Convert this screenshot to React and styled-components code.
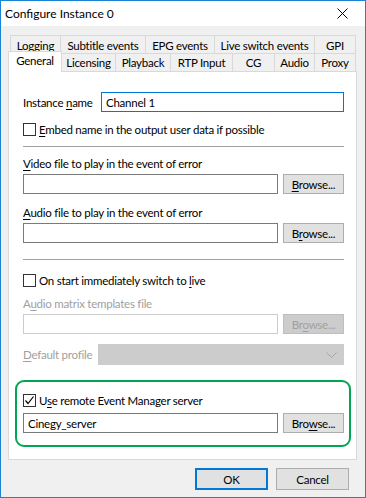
import React from "react";
import styled, { createGlobalStyle } from "styled-components";

const GlobalStyle = createGlobalStyle`
  html, body {
    margin: 0;
    padding: 0;
    background: #ffffff;
  }
  body {
    font-family: Lato, "Open Sans", sans-serif;
    font-size: 11.5px;
    letter-spacing: -0.25px;
    color: #000000;
  }
`;

const Window = styled.div`
  box-sizing: border-box;
  width: 366px;
  height: 498px;
  border: 1px solid #1883d7;
  background: #f0f0f0;
  display: flex;
  flex-direction: column;
`;

const TitleBar = styled.div`
  height: 25px;
  background: #ffffff;
  display: flex;
  align-items: center;
  justify-content: space-between;
  padding: 0 0 0 4px;
  font-size: 12px;
  letter-spacing: 0;
`;

const CloseBox = styled.div`
  width: 46px;
  height: 25px;
  display: flex;
  align-items: center;
  justify-content: center;
`;

const Body = styled.div`
  padding: 9px 9px 0 6px;
  display: flex;
  flex-direction: column;
`;

const TabRow = styled.div`
  display: flex;
  height: ${({ $h }) => $h}px;
  padding-left: ${({ $pl }) => $pl}px;
  align-items: flex-end;
`;

const Tab = styled.div`
  box-sizing: border-box;
  width: ${({ $w }) => $w}px;
  height: ${({ $h }) => $h}px;
  border: 1px solid #d9d9d9;
  border-bottom: none;
  margin-right: -1px;
  background: ${({ $active }) => ($active ? "#ffffff" : "#f0f0f0")};
  display: flex;
  align-items: center;
  justify-content: center;
  white-space: nowrap;
  position: relative;
  z-index: ${({ $active }) => ($active ? 2 : 1)};
  margin-bottom: ${({ $active }) => ($active ? "-1px" : "0")};
  padding-bottom: ${({ $active }) => ($active ? "4px" : "0")};
`;

const Panel = styled.div`
  box-sizing: border-box;
  width: 349px;
  height: 389px;
  margin-left: 1px;
  background: #ffffff;
  border: 1px solid #d9d9d9;
  padding: 20px 12px 0 14px;
  display: flex;
  flex-direction: column;
`;

const Row = styled.div`
  display: flex;
  align-items: center;
  gap: ${({ $gap }) => $gap ?? 5}px;
  margin-top: ${({ $mt }) => $mt ?? 0}px;
  height: ${({ $h }) => $h ?? 20}px;
`;

const Label = styled.div`
  height: 15px;
  line-height: 15px;
  margin-top: ${({ $mt }) => $mt ?? 0}px;
  color: ${({ $disabled }) => ($disabled ? "#a0a0a0" : "#000000")};
  white-space: nowrap;
  flex-shrink: 0;
  width: ${({ $w }) => ($w ? `${$w}px` : "auto")};
`;

const U = styled.span`
  text-decoration: underline;
  text-underline-offset: 2px;
`;

const Input = styled.div`
  box-sizing: border-box;
  width: ${({ $w }) => $w}px;
  height: 20px;
  border: 1px solid
    ${({ $focus, $disabled }) =>
      $focus ? "#0078d7" : $disabled ? "#cccccc" : "#7a7a7a"};
  background: #ffffff;
  padding: 0 4px;
  display: flex;
  align-items: center;
  white-space: nowrap;
`;

const Button = styled.div`
  box-sizing: border-box;
  width: ${({ $w }) => $w ?? 61}px;
  height: ${({ $h }) => $h ?? 20}px;
  border: ${({ $default }) => ($default ? "2px" : "1px")} solid
    ${({ $disabled, $default }) =>
      $default ? "#0078d7" : $disabled ? "#bfbfbf" : "#adadad"};
  background: ${({ $disabled }) => ($disabled ? "#cccccc" : "#e1e1e1")};
  color: ${({ $disabled }) => ($disabled ? "#a0a0a0" : "#000000")};
  display: flex;
  align-items: center;
  justify-content: center;
  white-space: nowrap;
  flex-shrink: 0;
`;

const Separator = styled.div`
  height: 1px;
  background: #a0a0a0;
  margin-top: ${({ $mt }) => $mt}px;
`;

const CheckRow = styled.div`
  display: flex;
  align-items: center;
  height: 15px;
  gap: 3px;
  margin-top: ${({ $mt }) => $mt ?? 0}px;
  white-space: nowrap;
`;

const Box = styled.div`
  box-sizing: border-box;
  width: 13px;
  height: 13px;
  border: 1px solid #333333;
  background: #ffffff;
  display: flex;
  align-items: center;
  justify-content: center;
`;

const Combo = styled.div`
  box-sizing: border-box;
  width: 246px;
  height: 21px;
  background: #cccccc;
  border: 1px solid #cccccc;
  display: flex;
  align-items: center;
  justify-content: flex-end;
  padding-right: 6px;
`;

const Highlight = styled.div`
  box-sizing: border-box;
  margin: 15px -7px 0 -8px;
  height: 67px;
  border: 2px solid #00a651;
  border-radius: 9px;
  padding: 11px 5px 0 6px;
  display: flex;
  flex-direction: column;
`;

const Footer = styled.div`
  display: flex;
  justify-content: flex-end;
  gap: 8px;
  padding: 8px 7px 0 0;
`;

function Check({ checked }) {
  return (
    <Box>
      {checked && (
        <svg width="11" height="11" viewBox="0 0 11 11">
          <polyline
            points="1.5,5.5 4,8.5 9.5,1.5"
            fill="none"
            stroke="#000"
            strokeWidth="1.2"
          />
        </svg>
      )}
    </Box>
  );
}

const topTabs = [
  ["Logging", 51],
  ["Subtitle events", 86],
  ["EPG events", 70],
  ["Live switch events", 101],
  ["GPI", 42],
];

const bottomTabs = [
  ["Licensing", 55],
  ["Playback", 56],
  ["RTP Input", 63],
  ["CG", 43],
  ["Audio", 41],
  ["Proxy", 42],
];

export default function App() {
  return (
    <>
      <GlobalStyle />
      <Window>
        <TitleBar>
          <span>Configure Instance 0</span>
          <CloseBox>
            <svg width="11" height="11" viewBox="0 0 11 11">
              <path d="M0.5 0.5 L10.5 10.5 M10.5 0.5 L0.5 10.5" stroke="#000" strokeWidth="1" />
            </svg>
          </CloseBox>
        </TitleBar>
        <Body>
          <TabRow $h={19} $pl={3}>
            {topTabs.map(([t, w]) => (
              <Tab key={t} $w={w} $h={19}>
                {t}
              </Tab>
            ))}
          </TabRow>
          <TabRow $h={17} $pl={1}>
            <Tab $active $w={54} $h={21}>
              General
            </Tab>
            {bottomTabs.map(([t, w]) => (
              <Tab key={t} $w={w} $h={18}>
                {t}
              </Tab>
            ))}
          </TabRow>
          <Panel>
            <Row $gap={0}>
              <Label $w={78}>
                Instance <U>n</U>ame
              </Label>
              <Input $w={243} $focus>
                Channel 1
              </Input>
            </Row>
            <CheckRow $mt={10}>
              <Check />
              <span>
                <U>E</U>mbed name in the output user data if possible
              </span>
            </CheckRow>
            <Separator $mt={9} />
            <Label $mt={9}>
              <U>V</U>ideo file to play in the event of error
            </Label>
            <Row $mt={3}>
              <Input $w={255} />
              <Button>
                <span>
                  <U>B</U>rowse...
                </span>
              </Button>
            </Row>
            <Label $mt={11}>
              <U>A</U>udio file to play in the event of error
            </Label>
            <Row $mt={3}>
              <Input $w={255} />
              <Button>
                <span>
                  B<U>r</U>owse...
                </span>
              </Button>
            </Row>
            <Separator $mt={16} />
            <CheckRow $mt={13}>
              <Check />
              <span>
                On start immediately switch to <U>l</U>ive
              </span>
            </CheckRow>
            <Label $mt={8} $disabled>
              A<U>u</U>dio matrix templates file
            </Label>
            <Row $mt={3}>
              <Input $w={255} $disabled />
              <Button $disabled>
                <span>
                  Br<U>o</U>wse...
                </span>
              </Button>
            </Row>
            <Row $mt={10} $h={21} $gap={0}>
              <Label $w={75} $disabled>
                <U>D</U>efault profile
              </Label>
              <Combo>
                <svg width="11" height="6" viewBox="0 0 11 6">
                  <polyline points="0.5,0.5 5.5,5.5 10.5,0.5" fill="none" stroke="#a6a6a6" strokeWidth="1" />
                </svg>
              </Combo>
            </Row>
            <Highlight>
              <CheckRow>
                <Check checked />
                <span>
                  U<U>s</U>e remote Event Manager server
                </span>
              </CheckRow>
              <Row $mt={5}>
                <Input $w={255}>Cinegy_server</Input>
                <Button>
                  <span>
                    Bro<U>w</U>se...
                  </span>
                </Button>
              </Row>
            </Highlight>
          </Panel>
          <Footer>
            <Button $default $w={73} $h={22}>
              OK
            </Button>
            <Button $w={73} $h={22}>
              Cancel
            </Button>
          </Footer>
        </Body>
      </Window>
    </>
  );
}
